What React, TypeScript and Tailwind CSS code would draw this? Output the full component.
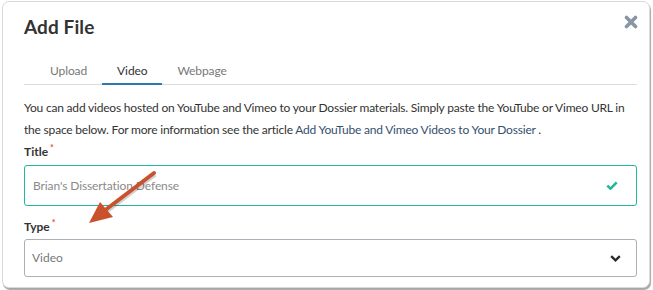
import React from "react";

export default function App() {
  return (
    <div className="relative h-[290px] w-[653px] overflow-hidden bg-white pt-[1px] pl-[2px] font-['Lato','Liberation_Sans',sans-serif] text-[#333]">
      <div className="relative h-[287px] w-[648px] rounded-[7px] border border-[#d9d9d9] bg-white pl-[21px] pr-[12px] shadow-[1px_2px_1px_rgba(0,0,0,0.35)]">
        <div className="flex items-start justify-between pt-[12px]">
          <h1 className="text-[19px] font-bold leading-[26px] tracking-[0.1px] text-[#333]">Add File</h1>
          <svg className="mt-[1px] mr-[-1px]" width="14" height="14" viewBox="0 0 14 14">
            <path d="M2.5 2.5 L11.5 11.5 M11.5 2.5 L2.5 11.5" stroke="#8a95a3" strokeWidth="3.6" strokeLinecap="round" />
          </svg>
        </div>

        <ul className="mt-[21px] flex border-b border-[#dcdcdc] pl-[11px] text-[12px] leading-[20px] tracking-[-0.1px]">
          <li className="px-[15px] pb-[3px] text-[#777]">Upload</li>
          <li className="mb-[-1px] border-b-2 border-[#2f78a8] px-[15px] pb-[2px] text-[#333]">Video</li>
          <li className="px-[15px] pb-[3px] text-[#777]">Webpage</li>
        </ul>

        <p className="mt-[12px] text-[12px] leading-[22px] tracking-[-0.2px]">
          You can add videos hosted on YouTube and Vimeo to your Dossier materials. Simply paste the YouTube or Vimeo URL in
          the space below. For more information see the article{" "}
          <span className="text-[#34506e]">Add YouTube and Vimeo Videos to Your Dossier</span> .
        </p>

        <label className="mt-[1px] flex text-[12px] font-bold leading-[20px]">
          Title<span className="ml-[2px] text-[9px] leading-[12px] text-[#e74c3c]">*</span>
        </label>
        <div className="mt-[3px] flex h-[41px] items-center justify-between rounded-[3px] border border-[#1fb89b] pl-[8px] pr-[18px] text-[12px] tracking-[-0.1px] text-[#8a8a8a]">
          <span>Brian's Dissertation Defense</span>
          <svg width="12" height="9" viewBox="0 0 12 9">
            <path d="M1.3 4.6 L4.5 7.6 L10.7 1.4" fill="none" stroke="#1fb89b" strokeWidth="2.6" />
          </svg>
        </div>

        <label className="mt-[11px] flex text-[12px] font-bold leading-[20px]">
          Type<span className="ml-[2px] text-[9px] leading-[12px] text-[#e74c3c]">*</span>
        </label>
        <div className="mt-[2px] flex h-[38px] items-center justify-between rounded-[3px] border border-[#a9b0b8] pl-[7px] pr-[15px] text-[12px] text-[#777]">
          <span>Video</span>
          <svg width="11" height="7" viewBox="0 0 11 7">
            <path d="M1.2 1.2 L5.5 5.3 L9.8 1.2" fill="none" stroke="#2b2b2b" strokeWidth="2.4" />
          </svg>
        </div>
      </div>

      <svg className="pointer-events-none absolute left-0 top-0" width="653" height="290" viewBox="0 0 653 290">
        <line x1="154" y1="173" x2="104" y2="211" stroke="rgba(0,0,0,0.18)" strokeWidth="4.5" transform="translate(1 1.5)" />
        <line x1="154" y1="173" x2="104" y2="211" stroke="#c9522c" strokeWidth="4" strokeLinecap="round" />
        <polygon points="89,223 100,202 113,217" fill="#c9522c" />
      </svg>
    </div>
  );
}
